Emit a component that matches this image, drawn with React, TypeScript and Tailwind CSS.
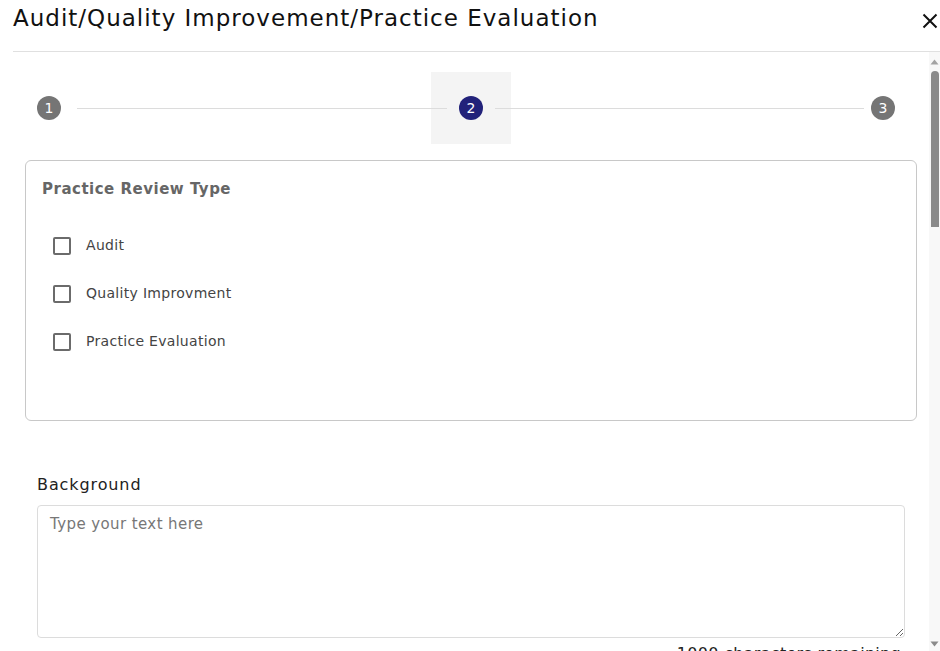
const font = { fontFamily: '"DejaVu Sans", "Liberation Sans", sans-serif' };

function StepCircle({ n, active }: { n: number; active?: boolean }) {
  return (
    <div
      className={`w-6 h-6 rounded-full flex items-center justify-center text-[14px] text-white shrink-0 ${
        active ? 'bg-[#22227a]' : 'bg-[#757575]'
      }`}
    >
      {n}
    </div>
  );
}

function Check({ label }: { label: string }) {
  return (
    <label className="flex items-center h-12 pl-[27px]">
      <span className="w-[18px] h-[18px] border-2 border-[#6b6b6b] rounded-[2px] shrink-0" />
      <span className="ml-[15px] text-[14px] text-[#444] tracking-[0.3px]">{label}</span>
    </label>
  );
}

// fake scrollbar drawn to match the screenshot
function ScrollBar() {
  return (
    <div className="w-[11px] shrink-0 bg-[#f8f8f8] flex flex-col items-center">
      <svg width="9" height="6" viewBox="0 0 9 6" className="mt-[7px]">
        <path d="M4.5 0.5 L8.5 5.5 L0.5 5.5 Z" fill="#a3a3a3" />
      </svg>
      <div className="mt-[6px] w-[8px] h-[156px] rounded-t-full rounded-b-[3px] bg-[#8a8a8a]" />
      <div className="flex-1" />
      <svg width="9" height="6" viewBox="0 0 9 6" className="mb-[4px]">
        <path d="M0.5 0.5 L8.5 0.5 L4.5 5.5 Z" fill="#8a8a8a" />
      </svg>
    </div>
  );
}

export default function App() {
  return (
    <div className="h-[651px] bg-white flex flex-col overflow-hidden text-[#222]" style={font}>
      {/* Header */}
      <div className="ml-[13px] h-[52px] shrink-0 flex items-start justify-between border-b border-[#e0e0e0]">
        <h1 className="text-[23px] text-[#111] leading-[36px] tracking-[1px]">
          Audit/Quality Improvement/Practice Evaluation
        </h1>
        <button className="mt-[13px] mr-[2px]">
          <svg width="16" height="16" viewBox="0 0 16 16">
            <path d="M1.5 1.5 L14.5 14.5 M14.5 1.5 L1.5 14.5" stroke="#111" strokeWidth="2" />
          </svg>
        </button>
      </div>

      <div className="flex-1 flex min-h-0">
        {/* Body */}
        <div className="flex-1 overflow-hidden pl-[13px]">
          <div className="px-3">
            {/* Stepper */}
            <div className="flex items-center mt-5 pl-3">
              <StepCircle n={1} />
              <div className="relative z-10 ml-4 w-[370px] h-px bg-[#dcdcdc]" />
              <div className="-ml-4 w-20 h-[72px] bg-[#f4f4f4] flex items-center justify-center">
                <StepCircle n={2} active />
              </div>
              <div className="relative z-10 -ml-4 w-[369px] h-px bg-[#dcdcdc]" />
              <div className="ml-[7px]">
                <StepCircle n={3} />
              </div>
            </div>

            {/* Practice Review Type */}
            <div className="mt-4 h-[261px] border border-[#c8c8c8] rounded-md">
              <div className="pl-4 pt-[17px] text-[15px] font-bold text-[#666] tracking-[0.5px]">
                Practice Review Type
              </div>
              <div className="mt-[21px]">
                <Check label="Audit" />
                <Check label="Quality Improvment" />
                <Check label="Practice Evaluation" />
              </div>
            </div>

            {/* Background */}
            <div className="px-3 mt-[52px]">
              <div className="text-[16px] text-[#222] leading-6 tracking-[0.9px]">Background</div>
              <textarea
                placeholder="Type your text here"
                className="mt-[8px] w-full h-[133px] block border border-[#dcdcdc] rounded-[4px] px-3 py-[7px] text-[15px] tracking-[0.4px] text-[#333] placeholder:text-[#777] outline-none resize-y"
                style={font}
              />
              <div className="text-right text-[16px] text-[#222] pr-[4px] mt-[4px] tracking-[0.3px]">
                1000 characters remaining
              </div>
            </div>
          </div>
        </div>
        <ScrollBar />
      </div>
    </div>
  );
}
